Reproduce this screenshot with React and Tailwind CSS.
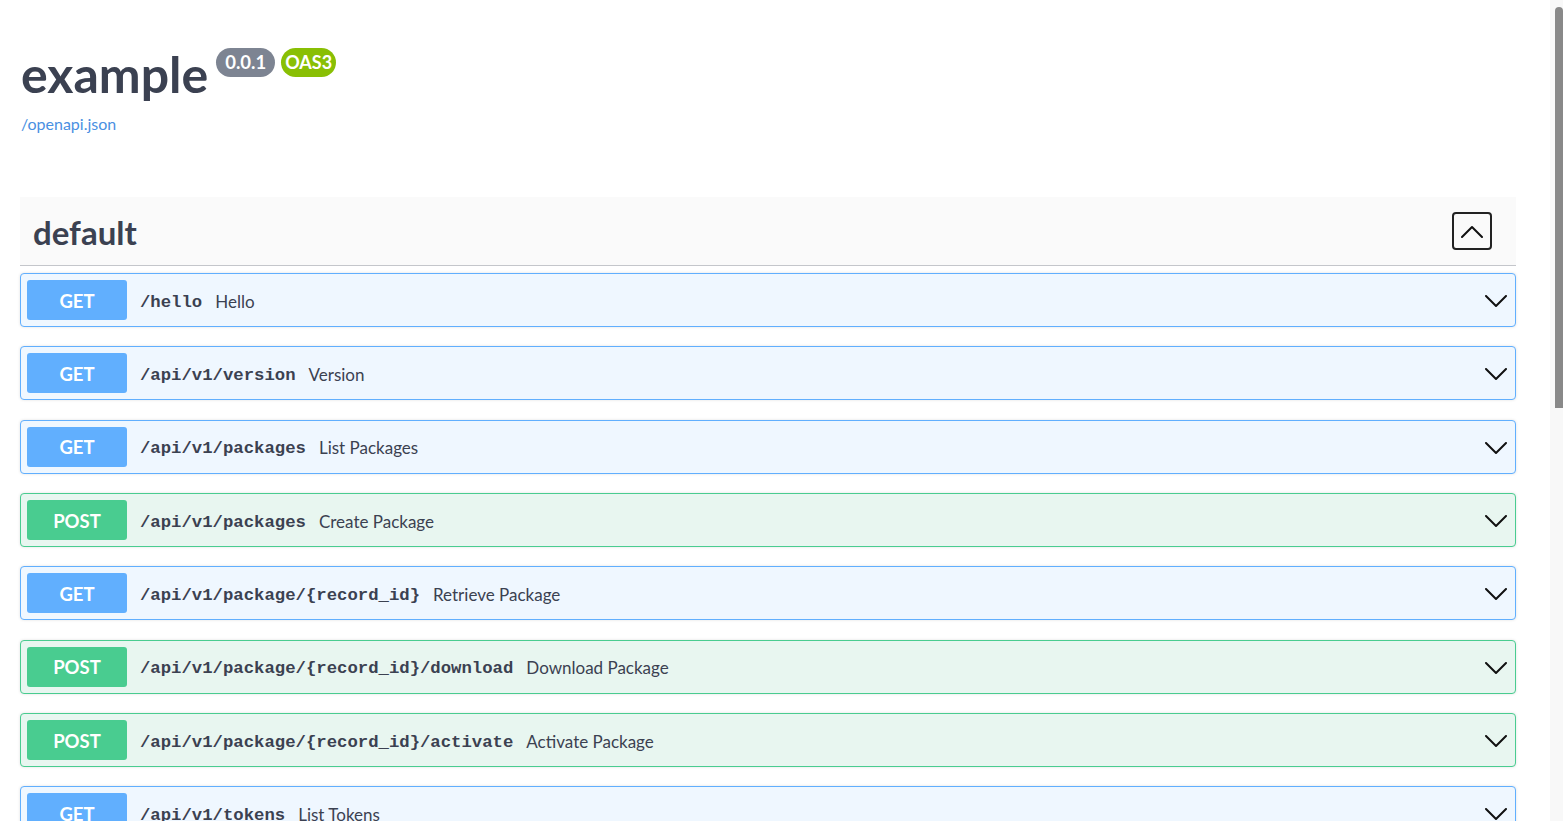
import React from 'react';

const OPS = [
  { method: 'GET', path: '/hello', summary: 'Hello' },
  { method: 'GET', path: '/api/v1/version', summary: 'Version' },
  { method: 'GET', path: '/api/v1/packages', summary: 'List Packages' },
  { method: 'POST', path: '/api/v1/packages', summary: 'Create Package' },
  { method: 'GET', path: '/api/v1/package/{record_id}', summary: 'Retrieve Package' },
  { method: 'POST', path: '/api/v1/package/{record_id}/download', summary: 'Download Package' },
  { method: 'POST', path: '/api/v1/package/{record_id}/activate', summary: 'Activate Package' },
  { method: 'GET', path: '/api/v1/tokens', summary: 'List Tokens' },
  { method: 'POST', path: '/api/v1/tokens', summary: 'Create Token' },
];

const STYLES = {
  GET: { row: 'bg-[#eff7ff] border-[#61affe]', badge: 'bg-[#61affe]' },
  POST: { row: 'bg-[#e8f6f0] border-[#49cc90]', badge: 'bg-[#49cc90]' },
};

function Chevron({ up = false }) {
  return (
    <svg width="22" height="13" viewBox="0 0 22 13" fill="none">
      <polyline
        points={up ? '1,12 11,2 21,12' : '1,1 11,11 21,1'}
        stroke="#111"
        strokeWidth="2"
        strokeLinecap="round"
        strokeLinejoin="round"
      />
    </svg>
  );
}

function OpRow({ op }) {
  const s = STYLES[op.method];
  return (
    <div className={`h-[54px] shrink-0 flex items-center border rounded-[4px] pl-[6px] pr-[8px] shadow-[0_0_3px_rgba(0,0,0,0.12)] ${s.row}`}>
      <span className={`${s.badge} w-[100px] h-[40px] rounded-[3px] flex items-center justify-center pt-[3px] text-white font-bold text-[18.5px]`}>
        {op.method}
      </span>
      <span className="ml-[13px] pt-[5px] font-['Liberation_Mono',monospace] font-bold text-[17.3px] text-[#3b4151]">
        {op.path}
      </span>
      <span className="ml-[13px] pt-[3px] text-[17px] text-[#3b4151]">{op.summary}</span>
      <span className="ml-auto pt-[3px] flex items-center">
        <Chevron />
      </span>
    </div>
  );
}

export default function App() {
  return (
    <div className="h-[821px] overflow-hidden flex bg-white font-['Lato',sans-serif]">
      <main className="flex-1 pl-[20px] pr-[34px] flex flex-col">
        {/* Info */}
        <div className="pt-[46px] pl-[1px]">
          <div className="flex items-start">
            <h1 className="text-[50px] leading-[56px] font-bold text-[#3b4151]">example</h1>
            <span className="ml-[8px] mt-[2px] h-[29px] px-[9px] rounded-full bg-[#7d8492] text-white font-bold text-[18.5px] flex items-center">
              0.0.1
            </span>
            <span className="ml-[6px] mt-[2px] h-[29px] px-[4px] rounded-full bg-[#89bf04] text-white font-bold text-[18px] flex items-center">
              OAS3
            </span>
          </div>
          <a className="block mt-[12px] text-[16px] leading-[20px] text-[#4990e2]">/openapi.json</a>
        </div>

        {/* Tag section */}
        <div className="mt-[63px] h-[69px] shrink-0 bg-[#fafafa] border-b border-[#c4c6cb] flex items-center pl-[13px] pr-[24px]">
          <h3 className="pt-[4px] text-[33px] font-bold text-[#3b4151]">default</h3>
          <button className="ml-auto w-[40px] h-[38px] border-2 border-[#222] rounded-[4px] flex items-center justify-center">
            <Chevron up />
          </button>
        </div>

        <div className="mt-[7px] flex flex-col gap-[19.33px]">
          {OPS.map((op, i) => (
            <OpRow key={i} op={op} />
          ))}
        </div>
      </main>

      {/* scrollbar */}
      <div className="w-[13px] bg-[#f8f8f8] flex justify-end">
        <div className="mt-[7px] w-[8px] h-[401px] bg-[#898989] rounded-t-[5px]" />
      </div>
    </div>
  );
}
